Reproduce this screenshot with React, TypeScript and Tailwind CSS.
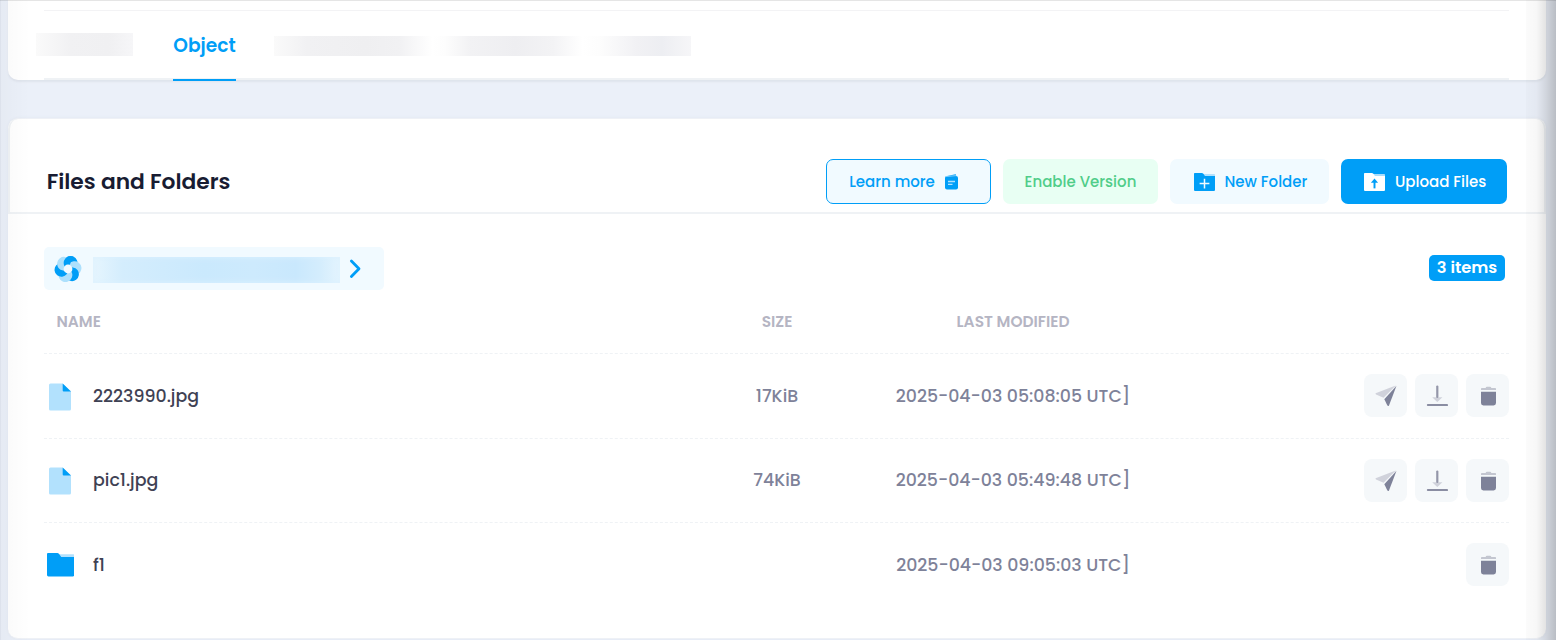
import type { ReactNode } from "react";

const FileIcon = () => (
  <svg width="22" height="28" viewBox="0 0 22 28">
    <path d="M1.5 0.5H13.5L22 8.5V26Q22 27.5 20.5 27.5H1.5Q0 27.5 0 26V2Q0 .5 1.5 .5Z" fill="#b2e1fd" />
    <path d="M13.7 .5L22 8.5H14.7Q13.7 8.5 13.7 7.5Z" fill="#009ef7" />
  </svg>
);

const FolderIcon = ({ children, front = "#009ef7", back = "#b2e1fd", className }: { children?: ReactNode; front?: string; back?: string; className: string }) => (
  <svg className={className} viewBox="0 0 28 24" preserveAspectRatio="none">
    <path d="M10 1.4H27Q28 1.4 28 2.4V10H10Z" fill={back} />
    <path d="M1 0H10.6Q11.5 0 12.2 .8L14.6 4H28V22.5Q28 24 26.5 24H1.5Q0 24 0 22.5V1Q0 0 1 0Z" fill={front} />
    {children}
  </svg>
);

const BookIcon = () => (
  <svg width="14" height="16" viewBox="0 0 14 16">
    <path d="M1 2.2L10.4 .2Q11 .1 11 .8V2.5H1Z" fill="#009ef7" />
    <rect x="0" y="2" width="13" height="13.4" rx="2" fill="#009ef7" />
    <path d="M.4 2.6L11.4 1.6" stroke="#9bd9fc" strokeWidth=".8" />
    <path d="M3 7.5H10M3 10.3H7.5" stroke="#b2e1fd" strokeWidth="1.3" />
  </svg>
);

const petals = [23, 83, 143, 203, 263, 323];

const Logo = () => (
  <svg width="28" height="28" viewBox="-14 -14 28 28">
    <clipPath id="trailing-half">
      <rect x="-14" y="-14" width="14" height="14" />
    </clipPath>
    {petals.map((angle, i) => (
      <circle key={angle} transform={`rotate(${angle})`} cy="-6.6" r="6.9" fill={i % 2 ? "#ade0fc" : "#009ef7"} />
    ))}
    <g transform="rotate(23)" clipPath="url(#trailing-half)">
      <circle cy="-6.6" r="6.9" fill="#009ef7" />
    </g>
    <circle r="4.4" fill="#f1faff" />
  </svg>
);

const PlaneIcon = () => (
  <svg width="22" height="22" viewBox="0 0 22 22">
    <path d="M.6 8.2L20.8 .5L8.6 12.8L1 9.5Q.2 8.8 .6 8.2Z" fill="#d0d2db" />
    <path d="M21.5 .8L14 20.4Q13.3 21.6 12.4 20.6L9.3 14.2Z" fill="#7e8299" />
  </svg>
);

const DownloadIcon = () => (
  <svg width="22" height="22" viewBox="0 0 22 22">
    <path d="M6.2 12.2H16.4L11.9 16.6Q11.3 17.2 10.7 16.6Z" fill="#d0d2db" />
    <path d="M11.3 1.6V12" stroke="#9496a9" strokeWidth="2.2" strokeLinecap="round" />
    <path d="M1.9 20H21" stroke="#8a8da2" strokeWidth="2.2" strokeLinecap="round" />
  </svg>
);

const TrashIcon = () => (
  <svg className="ml-px" width="15" height="20" viewBox="0 0 15 20">
    <path d="M0 2.8Q0 2 .8 2H4.6Q5 .8 6 .8H9Q10 .8 10.4 2H14.2Q15 2 15 2.8V4H0Z" fill="#c3c6d0" />
    <path d="M0 5.8H15V17Q15 19.4 12.6 19.4H2.4Q0 19.4 0 17Z" fill="#7e8299" />
  </svg>
);

const Action = ({ label, children }: { label: string; children: ReactNode }) => (
  <button aria-label={label} className="flex size-[43px] items-center justify-center rounded-[8px] bg-[#f5f8fa]">
    {children}
  </button>
);

type Entry = { name: string; size?: string; modified: string; height: string; text: string; icon: string };

const entries: Entry[] = [
  { name: "2223990.jpg", size: "17KiB", modified: "2025-04-03 05:08:05 UTC]", height: "h-[85px] pb-px", text: "pt-0.5", icon: "pt-0.5" },
  { name: "pic1.jpg", size: "74KiB", modified: "2025-04-03 05:49:48 UTC]", height: "h-[84px]", text: "", icon: "" },
  { name: "f1", modified: "2025-04-03 09:05:03 UTC]", height: "h-[83px]", text: "pt-px", icon: "pt-px" },
];

const columns = "grid grid-cols-[649px_168px_304px_344px]";

export default function App() {
  return (
    <div className="relative h-[640px] w-[1556px] overflow-hidden bg-[#ebf0f9] font-['Poppins','Inter',sans-serif]">
      <section className="ml-2 h-20 w-[1538px] rounded-b-[10px] bg-white px-9 shadow-[0_2px_2px_#dfe4ed]">
        <div className="h-[11px] w-[1465px] border-b border-[#f3f3f5]" />
        <nav className="flex h-[69px] w-[1465px] items-start border-b-2 border-[#eff2f5]">
          <div className="-ml-2 mt-[22px] h-[23px] w-[97px] bg-[linear-gradient(90deg,#fafafa,#f1f1f3_35%,#f0f0f2_75%,#f6f6f8)]" />
          <div className="ml-10 flex h-[70px] w-[63px] justify-center border-b-2 border-[#009ef7] pt-[21px] text-[18.6px] leading-7 font-semibold text-[#009ef7]">Object</div>
          <div className="ml-[38px] mt-[25px] h-5 w-[417px] bg-[linear-gradient(90deg,#fafafa,#f1f1f3_8%,#efeff1_22%,#f1f1f3_30%,#fff_38%,#fdfdfd_41%,#f2f2f4_47%,#eeeef1_58%,#f3f3f5_67%,#fff_74%,#fdfdfd_78%,#f1f1f4_87%,#edeef2_93%,#f6f6f8)]" />
        </nav>
      </section>

      <section className="ml-2 mt-[38px] h-[521px] w-[1538px] rounded-[10px] border-t border-b border-[#eef1f6] bg-white shadow-[0_0_3px_#e1e6f0]">
        <header className="flex h-[95px] items-start justify-between rounded-t-[10px] border-x-2 border-b-2 border-[#eff2f5] pt-10 pr-[37px] pl-[37px]">
          <h1 className="-ml-[0.3px] pt-[7px] text-[21.8px] leading-8 font-semibold whitespace-nowrap text-[#181c32]">Files and Folders</h1>
          <div className="flex gap-3 text-[15px] font-medium whitespace-nowrap">
            <button className="flex h-[45px] w-[165px] items-center rounded-[7px] border border-[#009ef7] bg-[#f1faff] pl-[22px] text-[#009ef7]">
              <span className="mr-2.5 w-[86px] pt-px">Learn more</span>
              <BookIcon />
            </button>
            <button className="h-[45px] w-[155px] rounded-[7px] bg-[#e8fff3] pt-px text-[#50cd89]">Enable Version</button>
            <button className="flex h-[45px] w-[159px] items-center rounded-[7px] bg-[#f1faff] pl-6 text-[#009ef7]">
              <FolderIcon className="mr-[9.5px] h-[18px] w-[21px]">
                <path d="M14 7.5V20.5M7.5 14H20.5" stroke="#f1faff" strokeWidth="2" />
              </FolderIcon>
              <span className="pt-px">New Folder</span>
            </button>
            <button className="flex h-[45px] w-[166px] items-center rounded-[7px] bg-[#009ef7] pl-[23px] text-white">
              <FolderIcon className="mr-2.5 h-[18px] w-[21px]" front="#fff" back="#a8dcfb">
                <path d="M14 20.5V11" stroke="#009ef7" strokeWidth="2.6" />
                <path d="M9.2 13L14 7.2L18.8 13Z" fill="#009ef7" />
              </FolderIcon>
              <span className="pt-px">Upload Files</span>
            </button>
          </div>
        </header>

        <div className="px-9">
          <div className="flex items-start justify-between pt-[33px] pr-[5px]">
            <div className="flex h-[43px] w-[340px] items-center rounded-[5px] bg-[#f1faff] pl-2.5">
              <Logo />
              <div className="mt-0.5 ml-[11px] h-[26px] w-[247px] bg-[linear-gradient(90deg,#e6f5fe,#d4edfd_12%,#cae9fd_45%,#cdeafd_65%,#c9e8fd_82%,#d4edfd_92%,#e4f4fe)] shadow-[inset_0_0_6px_#dcf1fe]" />
              <svg className="ml-[9px]" width="12" height="20" viewBox="0 0 12 20">
                <path d="M2.4 2L10 9.7L2.4 17.4" fill="none" stroke="#009ef7" strokeWidth="2.8" strokeLinecap="round" strokeLinejoin="round" />
              </svg>
            </div>
            <span className="mt-2 flex h-[26px] w-[76px] items-center justify-center rounded-[5px] bg-[#009ef7] text-[16.3px] font-semibold text-white">3 items</span>
          </div>

          <div className={`${columns} h-[64px] w-[1465px] border-b border-dashed border-[#eff2f5] pt-5 text-[15.4px] leading-6 font-semibold text-[#b5b5c3]`}>
            <span className="pl-[12.5px]">NAME</span>
            <span className="text-center">SIZE</span>
            <span className="text-center">LAST MODIFIED</span>
          </div>

          {entries.map((e, i) => (
            <div key={e.name} className={`${columns} ${e.height} w-[1465px] items-center ${i < 2 ? "border-b border-dashed border-[#eff2f5]" : ""} text-[17.4px] font-medium text-[#7e8299]`}>
              <div className="flex items-center text-[#3f4254]">
                <span className={`flex w-[49px] ${e.icon}`}>
                  {e.size ? <span className="pl-[5.3px]"><FileIcon /></span> : <span className="pl-[2.7px]"><FolderIcon className="h-[23.5px] w-[27.3px]" /></span>}
                </span>
                <span className={e.text}>{e.name}</span>
              </div>
              <span className={`text-center ${e.text}`}>{e.size}</span>
              <span className={`text-center whitespace-nowrap ${e.text}`}>{e.modified}</span>
              <div className="flex justify-end gap-2">
                {e.size && <Action label="Share"><PlaneIcon /></Action>}
                {e.size && <Action label="Download"><DownloadIcon /></Action>}
                <Action label="Delete"><TrashIcon /></Action>
              </div>
            </div>
          ))}
        </div>
      </section>

      <div className="pointer-events-none absolute inset-y-0 right-0 w-[30px] bg-[linear-gradient(90deg,rgba(0,0,0,0.015),rgba(0,0,0,0.03)_35%,rgba(0,0,0,0.11)_66%,rgba(0,0,0,0.21))]" />
      <div className="pointer-events-none absolute inset-y-0 left-0 w-[30px] border-l border-[#dde2ec] bg-[linear-gradient(90deg,rgba(0,0,0,0.025),rgba(0,0,0,0))]" />
      <div className="pointer-events-none absolute inset-x-0 top-0 h-px bg-black/10" />
    </div>
  );
}
